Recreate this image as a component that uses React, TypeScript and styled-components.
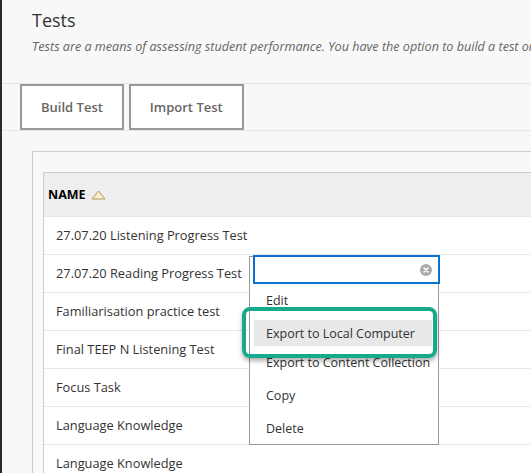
import React from 'react'
import styled, { createGlobalStyle } from 'styled-components'

const GlobalStyle = createGlobalStyle`
  html, body {
    margin: 0;
    padding: 0;
    background: #f8f8f8;
    font-family: 'Open Sans', 'Liberation Sans', sans-serif;
    overflow: hidden;
  }
`

const rows = [
  '27.07.20 Listening Progress Test',
  '27.07.20 Reading Progress Test',
  'Familiarisation practice test',
  'Final TEEP N Listening Test',
  'Focus Task',
  'Language Knowledge',
  'Language Knowledge',
]

interface MenuEntry {
  label: string
  active?: boolean
}

const menuItems: MenuEntry[] = [
  { label: 'Edit' },
  { label: 'Export to Local Computer', active: true },
  { label: 'Export to Content Collection' },
  { label: 'Copy' },
  { label: 'Delete' },
]

const App = (): React.ReactElement => {
  return (
    <Page>
      <GlobalStyle />
      <Header>
        <Title>Tests</Title>
        <Subtitle>
          Tests are a means of assessing student performance. You have the option to build a test or import one
        </Subtitle>
      </Header>
      <Toolbar>
        <ActionButton>Build Test</ActionButton>
        <ActionButton>Import Test</ActionButton>
      </Toolbar>
      <ListBox>
        <Table>
          <HeadRow>
            <HeadLabel>NAME</HeadLabel>
            <SortIcon width="15" height="10" viewBox="0 0 15 10">
              <path d="M7.5 1 L14 9 L1 9 Z" fill="#fbeec2" stroke="#a89a6a" strokeWidth="1" strokeLinejoin="round" />
            </SortIcon>
          </HeadRow>
          {rows.map((name, i) => (
            <Row key={i}>{name}</Row>
          ))}
          <Menu>
            <SearchBox>
              <ClearIcon width="12" height="12" viewBox="0 0 12 12">
                <circle cx="6" cy="6" r="6" fill="#aaa" />
                <path d="M4 4 L8 8 M8 4 L4 8" stroke="#fff" strokeWidth="1.6" strokeLinecap="round" />
              </ClearIcon>
            </SearchBox>
            {menuItems.map((item) => (
              <MenuItem key={item.label} $active={item.active}>
                {item.label}
              </MenuItem>
            ))}
            <Highlight />
          </Menu>
        </Table>
      </ListBox>
    </Page>
  )
}

const Page = styled.div`
  height: 473px;
  border-left: 2px solid #2b2b2b;
  background: #f8f8f8;
  overflow: hidden;
`
const Header = styled.div`
  padding: 8px 0 0 30px;
  height: 74px;
  box-sizing: border-box;
  white-space: nowrap;
`
const Title = styled.h1`
  margin: 0;
  font-size: 18px;
  font-weight: 400;
  color: #333;
  line-height: 24px;
`
const Subtitle = styled.div`
  margin-top: 6px;
  font-size: 12.6px;
  font-style: italic;
  color: #666;
`
const Toolbar = styled.div`
  display: flex;
  gap: 5px;
  padding-left: 18px;
  border-top: 1px solid #e6e6e6;
  border-bottom: 1px solid #e6e6e6;
  margin-top: 9px;
`
const ActionButton = styled.button`
  height: 46px;
  padding: 0 19px;
  background: #fff;
  border: 2px solid #999;
  font-family: 'Open Sans', 'Liberation Sans', sans-serif;
  font-size: 13px;
  font-weight: 600;
  color: #666;
  cursor: pointer;
`
const ListBox = styled.div`
  margin: 20px 0 0 30px;
  padding: 20px 0 0 10px;
  border-top: 1px solid #ccc;
  border-left: 1px solid #ccc;
`
const Table = styled.div`
  position: relative;
  border-top: 1px solid #ccc;
  border-left: 1px solid #ccc;
  background: #fff;
`
const HeadRow = styled.div`
  display: flex;
  align-items: center;
  height: 43px;
  padding-left: 4px;
  background: #eee;
`
const HeadLabel = styled.span`
  font-size: 12.5px;
  font-weight: 700;
  color: #000;
`
const SortIcon = styled.svg`
  margin-left: 5px;
  margin-top: 1px;
`
const Row = styled.div`
  display: flex;
  align-items: center;
  height: 38px;
  padding: 0 0 2px 12px;
  box-sizing: border-box;
  border-top: 1px solid #e8e8e8;
  font-size: 12.8px;
  color: #333;
  white-space: nowrap;
`
const Menu = styled.div`
  position: absolute;
  left: 205px;
  top: 83px;
  width: 188px;
  height: 187px;
  background: #fff;
  border: 1px solid #999;
`
const SearchBox = styled.div`
  display: flex;
  align-items: center;
  justify-content: flex-end;
  margin: -2px -2px 0 3px;
  height: 25px;
  padding-right: 6px;
  border: 2px solid #0a72cc;
  background: #fff;
`
const ClearIcon = styled.svg`
  display: block;
`
const MenuItem = styled.div<{ $active?: boolean }>`
  display: flex;
  align-items: center;
  height: ${(p) => (p.$active ? '26px' : '33px')};
  margin: ${(p) => (p.$active ? '3px 6px 0 4px' : '0 6px 0 4px')};
  padding-left: 12px;
  background: ${(p) => (p.$active ? '#e8e8e8' : 'transparent')};
  font-size: 12.5px;
  color: #333;
  white-space: nowrap;
`
const Highlight = styled.div`
  position: absolute;
  left: -8px;
  top: 50px;
  width: 187px;
  height: 43px;
  border: 4px solid #17a98b;
  border-radius: 8px;
  box-shadow: 0 3px 4px rgba(0, 0, 0, 0.3);
  pointer-events: none;
`

export default App
